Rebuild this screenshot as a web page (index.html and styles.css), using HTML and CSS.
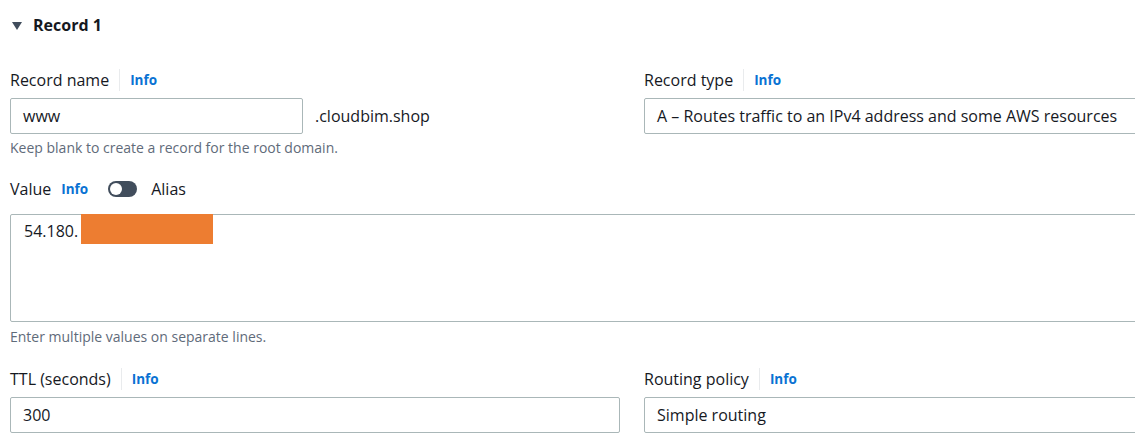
FILE: index.html
```html
<!DOCTYPE html>
<html lang="en">
<head>
<meta charset="utf-8">
<title>Record 1</title>
<link rel="stylesheet" href="styles.css">
</head>
<body>
<section class="record">
  <header class="record-head">
    <span class="caret"></span>
    <h2 class="record-title">Record 1</h2>
  </header>

  <div class="grid">
    <div class="field">
      <div class="label-row">
        <span class="label">Record name</span>
        <span class="divider"></span>
        <a class="info">Info</a>
      </div>
      <div class="name-row">
        <div class="input name-input">www</div>
        <span class="suffix">.cloudbim.shop</span>
      </div>
      <p class="hint">Keep blank to create a record for the root domain.</p>
    </div>
    <div class="field">
      <div class="label-row">
        <span class="label">Record type</span>
        <span class="divider"></span>
        <a class="info">Info</a>
      </div>
      <div class="input">A – Routes traffic to an IPv4 address and some AWS resources</div>
    </div>
  </div>

  <div class="value-block">
    <div class="label-row">
      <span class="label">Value</span>
      <a class="info info-tight">Info</a>
      <span class="toggle"><span class="knob"></span></span>
      <span class="label">Alias</span>
    </div>
    <div class="textarea"><span class="value-text">54.180.</span><span class="redact"></span></div>
    <p class="hint hint-2">Enter multiple values on separate lines.</p>
  </div>

  <div class="grid grid-bottom">
    <div class="field">
      <div class="label-row">
        <span class="label">TTL (seconds)</span>
        <span class="divider"></span>
        <a class="info">Info</a>
      </div>
      <div class="input">300</div>
    </div>
    <div class="field">
      <div class="label-row">
        <span class="label">Routing policy</span>
        <span class="divider"></span>
        <a class="info">Info</a>
      </div>
      <div class="input">Simple routing</div>
    </div>
  </div>
</section>
</body>
</html>
```

FILE: styles.css
```css
html, body {
  margin: 0;
  padding: 0;
  background: #ffffff;
  overflow: hidden;
}
body {
  font-family: "Open Sans", "Noto Sans", sans-serif;
  color: #16191f;
  width: 1135px;
  height: 443px;
}
.record {
  width: 1244px;
  padding-left: 10px;
}
.record-head {
  height: 50px;
  display: flex;
  align-items: center;
  gap: 11px;
  padding-left: 2px;
}
.caret {
  width: 0;
  height: 0;
  border-left: 5px solid transparent;
  border-right: 5px solid transparent;
  border-top: 8px solid #414d5c;
  margin-top: 1px;
}
.record-title {
  margin: 0;
  font-size: 16px;
  font-weight: 700;
  line-height: 22px;
}
.grid {
  display: grid;
  grid-template-columns: 610px 610px;
  column-gap: 24px;
  margin-top: 19px;
}
.label-row {
  display: flex;
  align-items: center;
  height: 22px;
  font-size: 16px;
  line-height: 22px;
}
.divider {
  width: 1px;
  height: 22px;
  background: #e9ebed;
  margin: 0 10px;
}
.info {
  color: #0972d3;
  font-weight: 700;
  font-size: 13.5px;
}
.info-tight {
  margin-left: 10px;
}
.input {
  box-sizing: border-box;
  margin-top: 7px;
  height: 36px;
  border: 1px solid #aab7b8;
  border-radius: 2px;
  padding: 0 12px;
  display: flex;
  align-items: center;
  font-size: 16px;
  white-space: nowrap;
  overflow: hidden;
}
.name-row {
  display: flex;
  align-items: flex-end;
  gap: 12px;
}
.name-input {
  width: 293px;
}
.suffix {
  font-size: 16px;
  height: 36px;
  line-height: 36px;
}
.hint {
  margin: 5px 0 0;
  font-size: 14px;
  line-height: 18px;
  color: #5f6b7a;
}
.value-block {
  margin-top: 21px;
}
.toggle {
  position: relative;
  width: 29px;
  height: 16px;
  border-radius: 8px;
  background: #414d5c;
  margin: 0 14px 0 20px;
}
.knob {
  position: absolute;
  left: 2px;
  top: 2px;
  width: 12px;
  height: 12px;
  border-radius: 50%;
  background: #ffffff;
}
.textarea {
  box-sizing: border-box;
  margin-top: 14px;
  height: 108px;
  border: 1px solid #aab7b8;
  border-radius: 2px;
  padding-left: 13px;
  display: flex;
  align-items: flex-start;
  font-size: 16px;
}
.value-text {
  line-height: 34px;
  margin-top: -1px;
}
.redact {
  width: 132px;
  height: 30px;
  background: #ed7d31;
  margin-top: -1px;
  margin-left: 3px;
}
.hint-2 {
  margin-top: 6px;
}
.grid-bottom {
  margin-top: 22px;
}
```
